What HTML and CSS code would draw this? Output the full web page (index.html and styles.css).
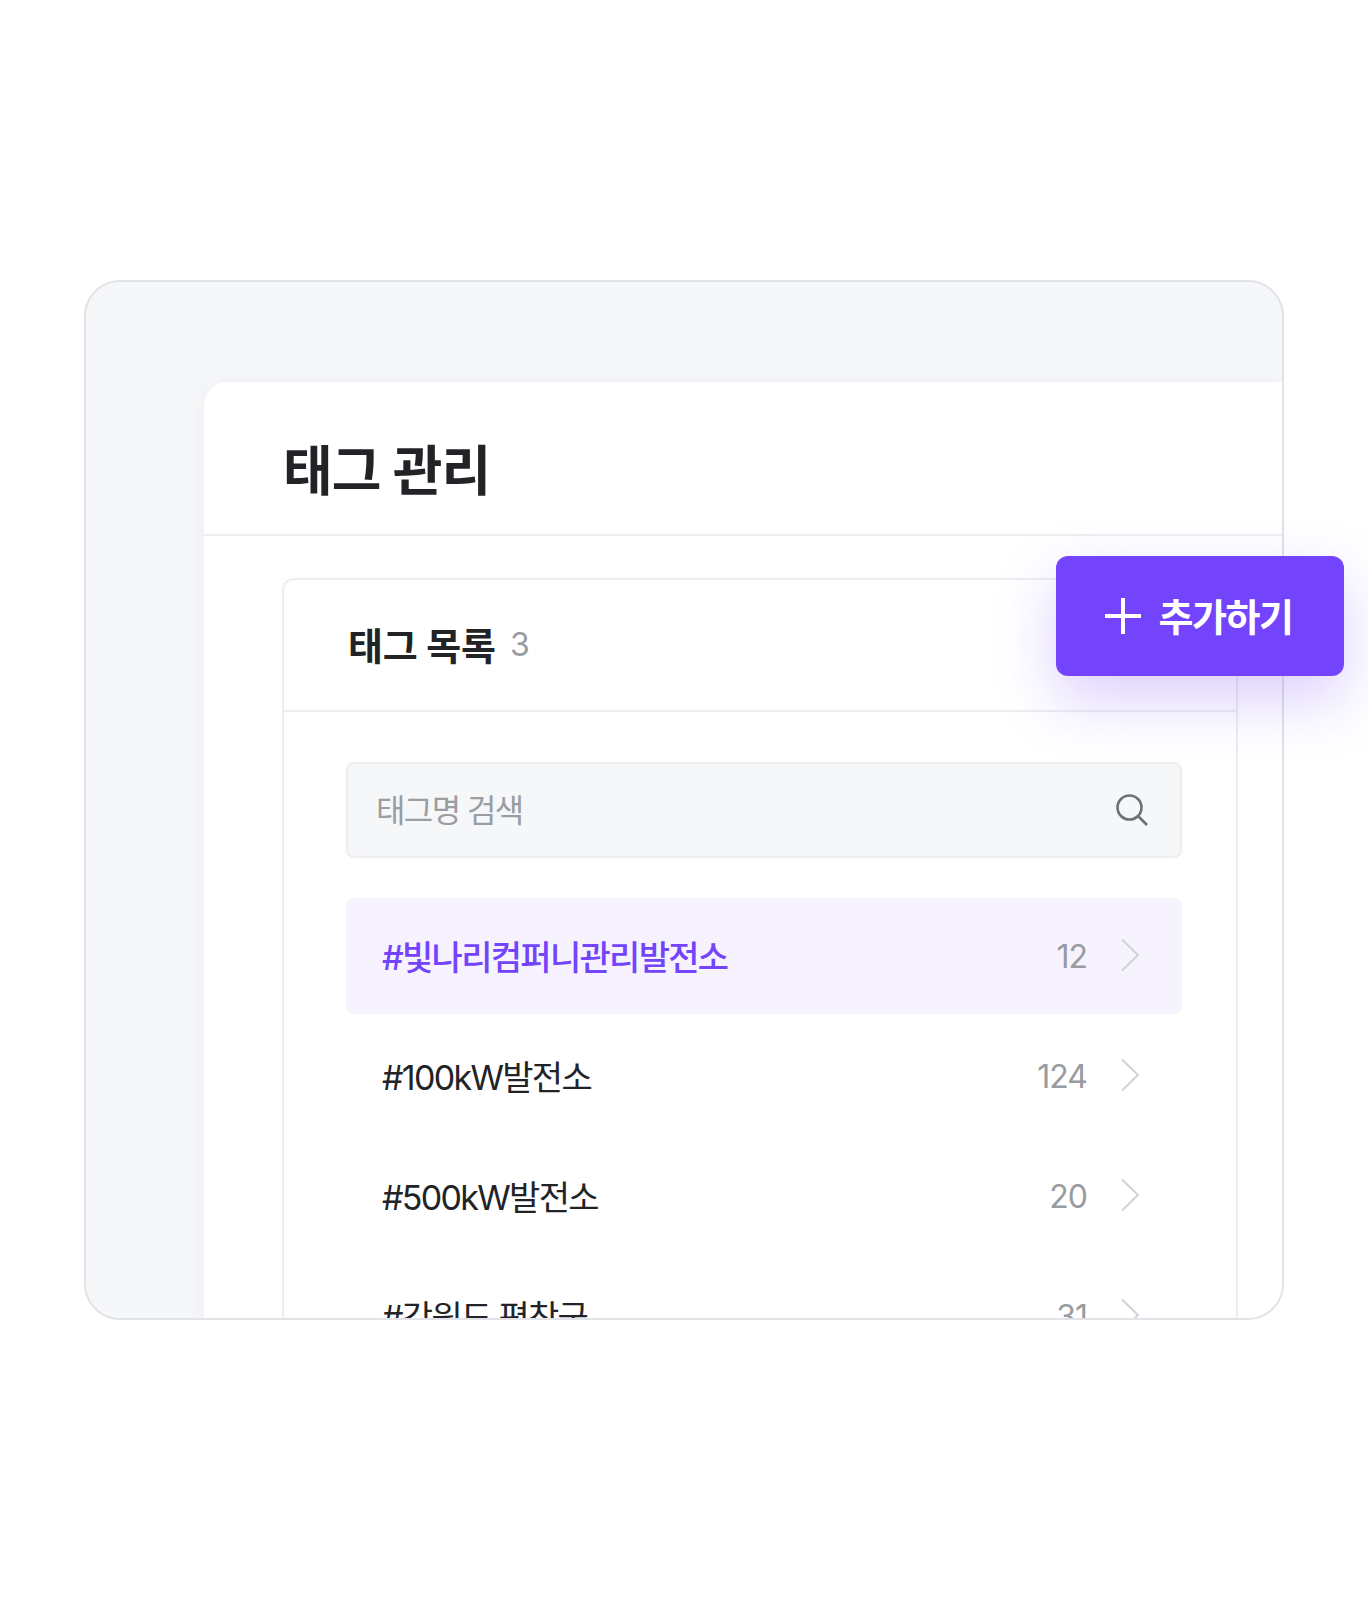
FILE: index.html
```html
<!DOCTYPE html>
<html lang="ko">
<head>
 <meta charset="UTF-8">
 <meta name="viewport" content="width=device-width, initial-scale=1.0">
 <title>태그 관리</title>
 <link rel="stylesheet" href="styles.css">
</head>
<body>
 <div class="stage">
  <div class="frame">
   <div class="panel">
    <div class="panel-header">
     <h1>태그 관리</h1>
    </div>
    <div class="card">
     <div class="card-header">
      <h2>태그 목록</h2>
      <span class="card-count">3</span>
     </div>
     <div class="card-body">
      <div class="search-box">
       <input type="text" class="search-input" placeholder="태그명 검색">
       <svg class="search-icon" width="34" height="34" viewBox="0 0 34 34" fill="none" stroke="#6e7074" stroke-width="2.6">
        <circle cx="14.5" cy="14.5" r="12"/>
        <path d="M23.5 23.5L32 32"/>
       </svg>
      </div>
      <div class="tag-list">
       <div class="tag-row selected">
        <span class="tag-name">#빛나리컴퍼니관리발전소</span>
        <span class="tag-count">12</span>
        <svg class="chevron" width="20" height="34" viewBox="0 0 20 34" fill="none" stroke="#d0d3d6" stroke-width="2"><path d="M2 1.5L18 17L2 32.5"/></svg>
       </div>
       <div class="tag-row">
        <span class="tag-name">#100kW발전소</span>
        <span class="tag-count">124</span>
        <svg class="chevron" width="20" height="34" viewBox="0 0 20 34" fill="none" stroke="#d0d3d6" stroke-width="2"><path d="M2 1.5L18 17L2 32.5"/></svg>
       </div>
       <div class="tag-row">
        <span class="tag-name">#500kW발전소</span>
        <span class="tag-count">20</span>
        <svg class="chevron" width="20" height="34" viewBox="0 0 20 34" fill="none" stroke="#d0d3d6" stroke-width="2"><path d="M2 1.5L18 17L2 32.5"/></svg>
       </div>
       <div class="tag-row">
        <span class="tag-name">#강원도 평창군</span>
        <span class="tag-count">31</span>
        <svg class="chevron" width="20" height="34" viewBox="0 0 20 34" fill="none" stroke="#d0d3d6" stroke-width="2"><path d="M2 1.5L18 17L2 32.5"/></svg>
       </div>
      </div>
     </div>
    </div>
   </div>
  </div>
  <button class="add-button">
   <svg width="36" height="36" viewBox="0 0 36 36" fill="none" stroke="#ffffff" stroke-width="4"><path d="M18 0V36M0 18H36"/></svg>
   <span class="add-label">추가하기</span>
  </button>
 </div>
</body>
</html>
```
FILE: styles.css
```css
* {
 box-sizing: border-box;
}

body {
 margin: 0;
 background-color: #ffffff;
 font-family: Inter, "Noto Sans CJK KR", sans-serif;
 color: #222326;
}

.stage {
 position: relative;
 height: 1600px;
 padding: 280px 84px 0;
}

.frame {
 width: 1200px;
 height: 1040px;
 padding: 100px 0 0 118px;
 border: 2px solid #e1e3e8;
 border-radius: 36px;
 background-color: #f6f7f9;
 overflow: hidden;
}

.panel {
 height: 1100px;
 border-radius: 24px 0 0 0;
 background-color: #ffffff;
 box-shadow: 0 0 24px rgba(30, 40, 80, 0.04);
}

.panel-header {
 display: flex;
 align-items: center;
 height: 154px;
 padding: 18px 0 0 79px;
 border-bottom: 2px solid #edeef0;
}

h1 {
 margin: 0;
 font-size: 54px;
 font-weight: 700;
 letter-spacing: -0.015em;
}

.card {
 width: 956px;
 margin: 42px 0 0 78px;
 border: 2px solid #edeef0;
 border-radius: 12px;
}

.card-header {
 display: flex;
 align-items: center;
 gap: 14px;
 height: 132px;
 padding-left: 64px;
 border-bottom: 2px solid #edeef0;
}

h2 {
 margin: 0 0 4px;
 font-size: 38px;
 font-weight: 700;
 letter-spacing: -0.005em;
}

.card-count {
 margin-bottom: 2px;
 font-size: 32px;
 font-weight: 400;
 color: #989ba0;
}

.card-body {
 padding: 50px 54px 0 62px;
}

.search-box {
 display: flex;
 align-items: center;
 height: 96px;
 padding: 0 31px 0 28px;
 border: 2px solid #edeef0;
 border-radius: 8px;
 background-color: #f6f7f9;
}

.search-input {
 flex: 1;
 border: none;
 outline: none;
 padding: 0;
 background: transparent;
 font-family: inherit;
 font-size: 32px;
 font-weight: 400;
 letter-spacing: -0.05em;
}

.search-input::placeholder {
 color: #9a9da2;
 opacity: 1;
}

.tag-list {
 display: flex;
 flex-direction: column;
 gap: 4px;
 margin-top: 40px;
}

.tag-row {
 display: flex;
 align-items: center;
 height: 116px;
 padding: 0 42px 0 36px;
 border-radius: 8px;
 font-size: 34px;
 letter-spacing: -0.05em;
}

.tag-row.selected {
 background-color: #f6f3ff;
 color: #7444fc;
 font-weight: 500;
}

.tag-name {
 flex: 1;
 padding-bottom: 2px;
}

.tag-count {
 margin-right: 33px;
 font-size: 32px;
 font-weight: 400;
 letter-spacing: -0.03em;
 color: #989ba0;
}

.chevron {
 margin-bottom: 2px;
}

.add-button {
 position: absolute;
 top: 556px;
 left: 1056px;
 display: flex;
 align-items: center;
 justify-content: center;
 gap: 18px;
 width: 288px;
 height: 120px;
 padding: 0 3px 0 0;
 border: none;
 border-radius: 12px;
 background-color: #7444fc;
 box-shadow: 0 24px 60px rgba(116, 68, 252, 0.25);
 color: #ffffff;
 font-family: inherit;
 font-size: 38px;
 font-weight: 600;
 letter-spacing: -0.04em;
}

.add-label {
 padding-bottom: 4px;
}
```
